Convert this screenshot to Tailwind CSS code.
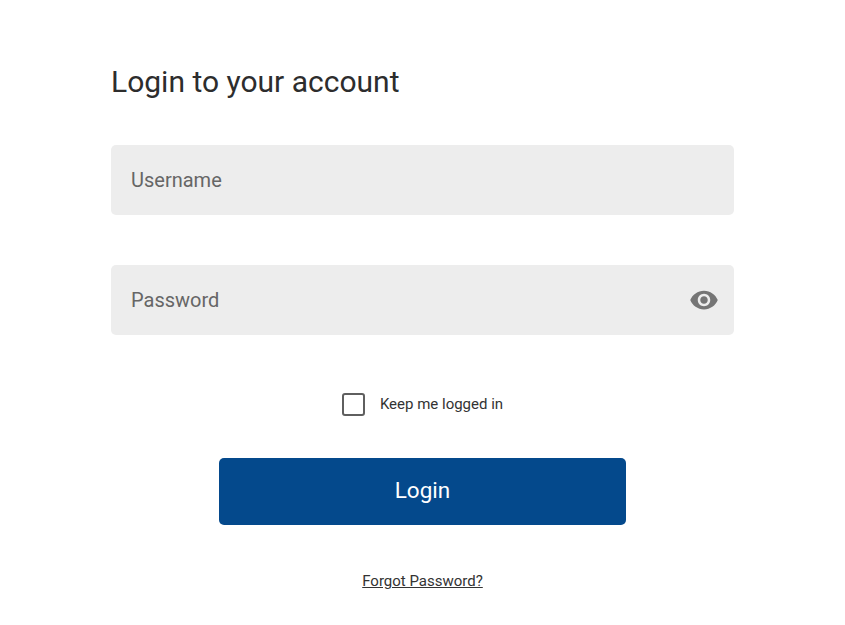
<!DOCTYPE html>
<html lang="en">
<head>
    <meta charset="UTF-8">
    <title>Login</title>
    <script src="https://cdn.jsdelivr.net/npm/@tailwindcss/browser@4"></script>
</head>
<body class="bg-white font-[Roboto,sans-serif]">
    <main class="w-[845px] h-[625px] overflow-hidden pl-[111px] pr-[111px] pt-[63px]">
        <h1 class="text-[30px] leading-[37px] text-[#2d2d2d]">Login to your account</h1>

        <div class="mt-[45px] h-[70px] bg-[#ededed] rounded-[5px] flex items-center px-[20px]">
            <span class="text-[20px] text-[#666666]">Username</span>
        </div>

        <div class="mt-[50px] h-[70px] bg-[#ededed] rounded-[5px] flex items-center justify-between pl-[20px] pr-[15px]">
            <span class="text-[20px] text-[#666666]">Password</span>
            <svg class="w-[30px] h-[30px]" viewBox="0 0 24 24" fill="#757575">
                <path d="M12 4.5C7 4.5 2.73 7.61 1 12c1.73 4.39 6 7.5 11 7.5s9.27-3.11 11-7.5c-1.73-4.39-6-7.5-11-7.5zM12 17c-2.76 0-5-2.24-5-5s2.24-5 5-5 5 2.24 5 5-2.24 5-5 5zm0-8c-1.66 0-3 1.34-3 3s1.34 3 3 3 3-1.34 3-3-1.34-3-3-3z"/>
            </svg>
        </div>

        <div class="mt-[58px] flex items-center justify-center gap-[15px]">
            <div class="w-[23px] h-[23px] border-2 border-[#5f5f5f] rounded-[3px]"></div>
            <span class="text-[15px] text-[#333333]">Keep me logged in</span>
        </div>

        <div class="mt-[42px] flex justify-center">
            <button class="w-[407px] h-[67px] bg-[#04498c] text-white text-[22.5px] pb-[1px] rounded-[5px]">Login</button>
        </div>

        <div class="mt-[44px] text-center">
            <a href="#" class="text-[15px] text-[#333333] underline">Forgot Password?</a>
        </div>
    </main>
</body>
</html>
